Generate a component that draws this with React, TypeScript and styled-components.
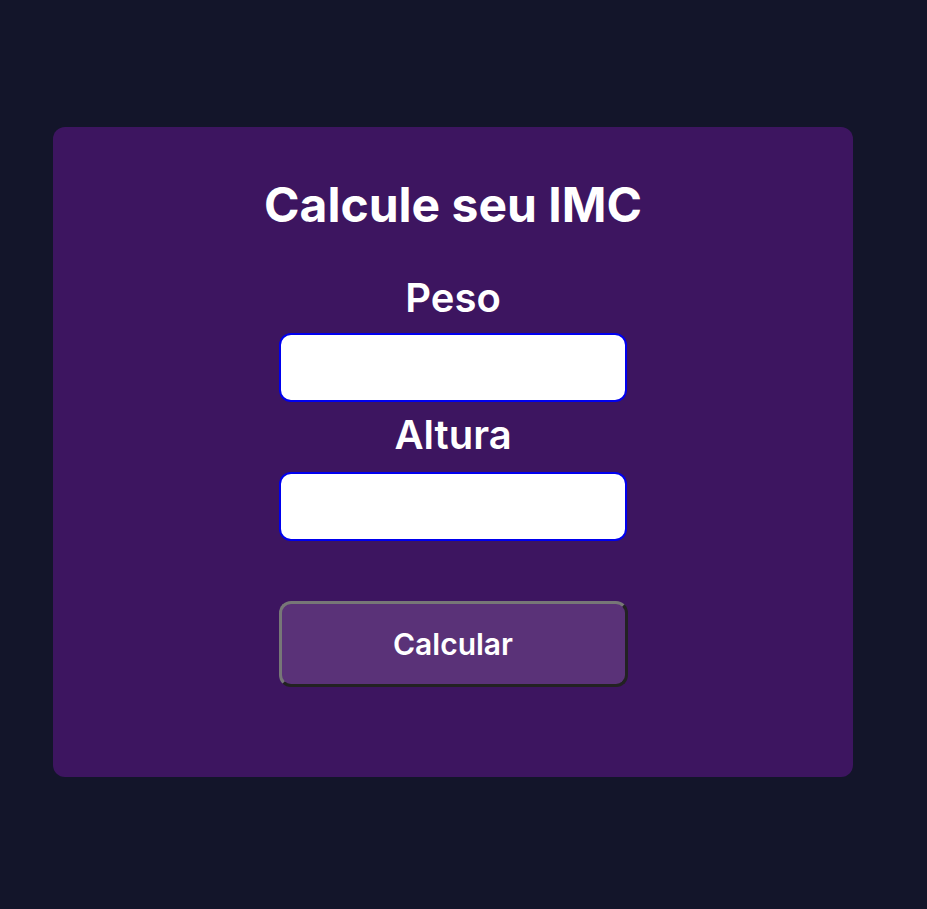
import React from "react";
import styled, { createGlobalStyle } from "styled-components";

const Global = createGlobalStyle`
  html, body { margin: 0; padding: 0; background: #13152a; }
  body { font-family: Inter, "Noto Sans", sans-serif; color: #ffffff; }
  * { box-sizing: border-box; }
`;

const Page = styled.div`
  min-height: 909px;
  padding: 127px 75px 0 53px;
`;

const Card = styled.form`
  width: 800px;
  height: 650px;
  background: #3d1560;
  border-radius: 12px;
  display: flex;
  flex-direction: column;
  align-items: center;
  padding-top: 54px;
`;

const Title = styled.h1`
  margin: 0 0 49px;
  font-size: 48px;
  font-weight: 700;
  line-height: 1;
`;

const Field = styled.div`
  display: flex;
  flex-direction: column;
  align-items: center;
  gap: 15px;
  & + & {
    margin-top: 13px;
  }
  & + & > label {
    margin-bottom: 2px;
  }
`;

const Label = styled.label`
  font-size: 40px;
  font-weight: 600;
  line-height: 1;
`;

const Input = styled.input`
  width: 348px;
  height: 69px;
  border: 2px solid #0000ee;
  border-radius: 12px;
  background: #ffffff;
  font-size: 20px;
  padding: 0 12px;
  outline: none;
`;

const Button = styled.button`
  margin-top: 60px;
  width: 349px;
  height: 86px;
  border: 3px outset #777;
  border-radius: 12px;
  background: #5a3278;
  color: #fff;
  font-family: Inter, sans-serif;
  font-size: 30px;
  font-weight: 600;
  cursor: pointer;
`;

export default function App() {
  return (
    <>
      <Global />
      <Page>
        <Card onSubmit={(e) => e.preventDefault()}>
          <Title>Calcule seu IMC</Title>
          <Field>
            <Label htmlFor="peso">Peso</Label>
            <Input id="peso" type="number" />
          </Field>
          <Field>
            <Label htmlFor="altura">Altura</Label>
            <Input id="altura" type="number" />
          </Field>
          <Button type="submit">Calcular</Button>
        </Card>
      </Page>
    </>
  );
}
